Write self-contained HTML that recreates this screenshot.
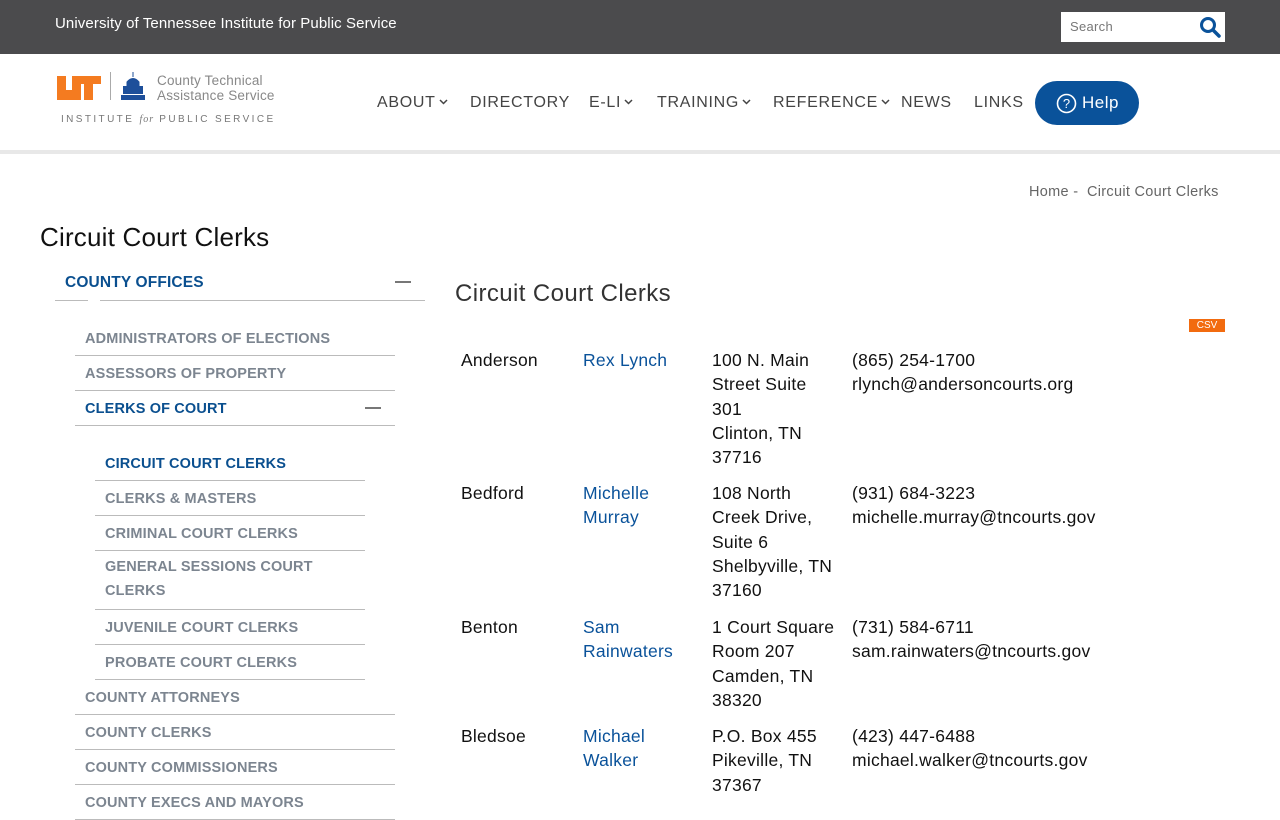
<!DOCTYPE html>
<html><head><meta charset="utf-8"><style>
*{box-sizing:border-box;margin:0;padding:0}
body{width:1280px;height:800px;overflow:hidden;font-family:"Liberation Sans",sans-serif;background:#fff;position:relative}
.top{position:absolute;left:0;top:0;width:1280px;height:54px;background:#4b4b4d}
.top .t{position:absolute;left:55px;top:15px;color:#fff;font-size:15px;letter-spacing:.1px}
.search{position:absolute;left:1061px;top:12px;width:164px;height:30px;background:#fff}
.search span{position:absolute;left:9px;top:7px;font-size:13px;color:#777;letter-spacing:.3px}
.hdr{position:absolute;top:54px;left:0;width:1280px;height:100px;border-bottom:4px solid #e8e8e8}
.nav{position:absolute;top:94px;font-size:16px;color:#444;letter-spacing:.7px}
.nav svg{margin-left:3px;vertical-align:2px}
.help{position:absolute;left:1035px;top:81px;width:104px;height:44px;border-radius:22px;background:#0a529a;color:#fff;font-size:17px}
.a{position:absolute;white-space:nowrap}
.side{position:absolute;font-size:14.5px;font-weight:bold;color:#7c8590;border-bottom:1px solid #bbb;height:35px;padding-top:10px;letter-spacing:.15px}
.blue{color:#0a4f8f}
.cell{position:absolute;font-size:17.5px;line-height:24.3px;color:#111;letter-spacing:.25px}
.cell.b{color:#0a529a}
</style></head><body>
<div class="top"><div class="t">University of Tennessee Institute for Public Service</div>
<div class="search"><span>Search</span>
<svg style="position:absolute;left:138px;top:4px" width="22" height="22" viewBox="0 0 22 22"><circle cx="9" cy="9" r="6.5" fill="none" stroke="#0a529a" stroke-width="3"/><line x1="14" y1="14" x2="20" y2="20" stroke="#0a529a" stroke-width="3.5" stroke-linecap="round"/></svg></div></div>
<div class="hdr"></div>
<svg class="a" style="left:57px;top:76px" width="44" height="24" viewBox="0 0 44 24"><path d="M0 0h9v14h6V0h9v24H0z" fill="#f47b20"/><path d="M20 0h24v8h-8v16h-9V8h-7z" fill="#f47b20"/><path d="M24 8h6v16h-6z" fill="#fff" opacity="0"/></svg>
<div class="a" style="left:110px;top:72px;width:1px;height:28px;background:#aaa"></div>
<svg class="a" style="left:119px;top:70px" width="28" height="32" viewBox="0 0 28 32"><path d="M14 2v5M8 12q6-7 12 0v4H8z" fill="#1d4f9a" stroke="#1d4f9a"/><rect x="4" y="16" width="20" height="8" fill="#1d4f9a"/><rect x="2" y="25" width="24" height="5" fill="#1d4f9a"/></svg>
<div class="a" style="left:157px;top:73px;font-size:13.5px;color:#888;line-height:15px;letter-spacing:.2px">County Technical<br>Assistance Service</div>
<div class="a" style="left:61px;top:114px;font-size:10px;color:#777;letter-spacing:2.4px">INSTITUTE <i style="font-family:'Liberation Serif',serif;letter-spacing:1px">for</i> PUBLIC SERVICE</div>
<div class="nav a" style="left:377px">ABOUT<svg width="9" height="6" viewBox="0 0 9 6"><path d="M1 1l3.5 3.5L8 1" fill="none" stroke="#444" stroke-width="1.5"/></svg></div>
<div class="nav a" style="left:470px">DIRECTORY</div>
<div class="nav a" style="left:589px">E-LI<svg width="9" height="6" viewBox="0 0 9 6"><path d="M1 1l3.5 3.5L8 1" fill="none" stroke="#444" stroke-width="1.5"/></svg></div>
<div class="nav a" style="left:657px">TRAINING<svg width="9" height="6" viewBox="0 0 9 6"><path d="M1 1l3.5 3.5L8 1" fill="none" stroke="#444" stroke-width="1.5"/></svg></div>
<div class="nav a" style="left:773px">REFERENCE<svg width="9" height="6" viewBox="0 0 9 6"><path d="M1 1l3.5 3.5L8 1" fill="none" stroke="#444" stroke-width="1.5"/></svg></div>
<div class="nav a" style="left:901px">NEWS</div>
<div class="nav a" style="left:974px">LINKS</div>
<div class="help"><svg style="position:absolute;left:21px;top:12px" width="21" height="21" viewBox="0 0 21 21"><circle cx="10.5" cy="10.5" r="9" fill="none" stroke="#fff" stroke-width="1.6"/><text x="10.5" y="15" text-anchor="middle" fill="#fff" font-size="13" font-family="Liberation Sans">?</text></svg><span style="position:absolute;left:47px;top:12px;letter-spacing:.5px">Help</span></div>
<div class="a" style="left:1029px;top:184px;font-size:14.5px;color:#666;letter-spacing:.3px">Home - &nbsp;Circuit Court Clerks</div>
<div class="a" style="left:40px;top:222px;font-size:26px;color:#111;letter-spacing:.2px">Circuit Court Clerks</div>
<div class="a" style="left:455px;top:280px;font-size:24px;color:#333;letter-spacing:.4px">Circuit Court Clerks</div>
<div class="a" style="left:1189px;top:319px;width:36px;height:13px;background:#f26b0f;color:#fff;font-size:10px;text-align:center;line-height:13px">CSV</div>
<div class="side blue" style="left:55px;top:264px;width:370px;padding-left:10px;height:37px;font-size:15.5px">COUNTY OFFICES<span style="position:absolute;right:14px;top:17px;width:16px;height:2px;background:#777"></span></div>
<div style="position:absolute;left:88px;top:298px;width:12px;height:6px;background:#fff"></div>
<div class="side" style="left:75px;top:321px;width:320px;padding-left:10px">ADMINISTRATORS OF ELECTIONS</div>
<div class="side" style="left:75px;top:356px;width:320px;padding-left:10px">ASSESSORS OF PROPERTY</div>
<div class="side blue" style="left:75px;top:391px;width:320px;padding-left:10px">CLERKS OF COURT<span style="position:absolute;right:14px;top:16px;width:16px;height:2px;background:#777"></span></div>
<div class="side blue" style="left:95px;top:446px;width:270px;padding-left:10px">CIRCUIT COURT CLERKS</div>
<div class="side" style="left:95px;top:481px;width:270px;padding-left:10px">CLERKS &amp; MASTERS</div>
<div class="side" style="left:95px;top:516px;width:270px;padding-left:10px">CRIMINAL COURT CLERKS</div>
<div class="side" style="left:95px;top:551px;width:270px;padding-left:10px;height:59px;line-height:24px;padding-top:4px">GENERAL SESSIONS COURT<br>CLERKS</div>
<div class="side" style="left:95px;top:610px;width:270px;padding-left:10px">JUVENILE COURT CLERKS</div>
<div class="side" style="left:95px;top:645px;width:270px;padding-left:10px">PROBATE COURT CLERKS</div>
<div class="side" style="left:75px;top:680px;width:320px;padding-left:10px">COUNTY ATTORNEYS</div>
<div class="side" style="left:75px;top:715px;width:320px;padding-left:10px">COUNTY CLERKS</div>
<div class="side" style="left:75px;top:750px;width:320px;padding-left:10px">COUNTY COMMISSIONERS</div>
<div class="side" style="left:75px;top:785px;width:320px;padding-left:10px">COUNTY EXECS AND MAYORS</div>

<div class="cell" style="left:461px;top:348px">Anderson</div>
<div class="cell b" style="left:583px;top:348px">Rex Lynch</div>
<div class="cell" style="left:712px;top:348px">100 N. Main<br>Street Suite<br>301<br>Clinton, TN<br>37716</div>
<div class="cell" style="left:852px;top:348px">(865) 254-1700<br>rlynch@andersoncourts.org</div>

<div class="cell" style="left:461px;top:481px">Bedford</div>
<div class="cell b" style="left:583px;top:481px">Michelle<br>Murray</div>
<div class="cell" style="left:712px;top:481px">108 North<br>Creek Drive,<br>Suite 6<br>Shelbyville, TN<br>37160</div>
<div class="cell" style="left:852px;top:481px">(931) 684-3223<br>michelle.murray@tncourts.gov</div>

<div class="cell" style="left:461px;top:615px">Benton</div>
<div class="cell b" style="left:583px;top:615px">Sam<br>Rainwaters</div>
<div class="cell" style="left:712px;top:615px">1 Court Square<br>Room 207<br>Camden, TN<br>38320</div>
<div class="cell" style="left:852px;top:615px">(731) 584-6711<br>sam.rainwaters@tncourts.gov</div>

<div class="cell" style="left:461px;top:724px">Bledsoe</div>
<div class="cell b" style="left:583px;top:724px">Michael<br>Walker</div>
<div class="cell" style="left:712px;top:724px">P.O. Box 455<br>Pikeville, TN<br>37367</div>
<div class="cell" style="left:852px;top:724px">(423) 447-6488<br>michael.walker@tncourts.gov</div>
</body></html>
